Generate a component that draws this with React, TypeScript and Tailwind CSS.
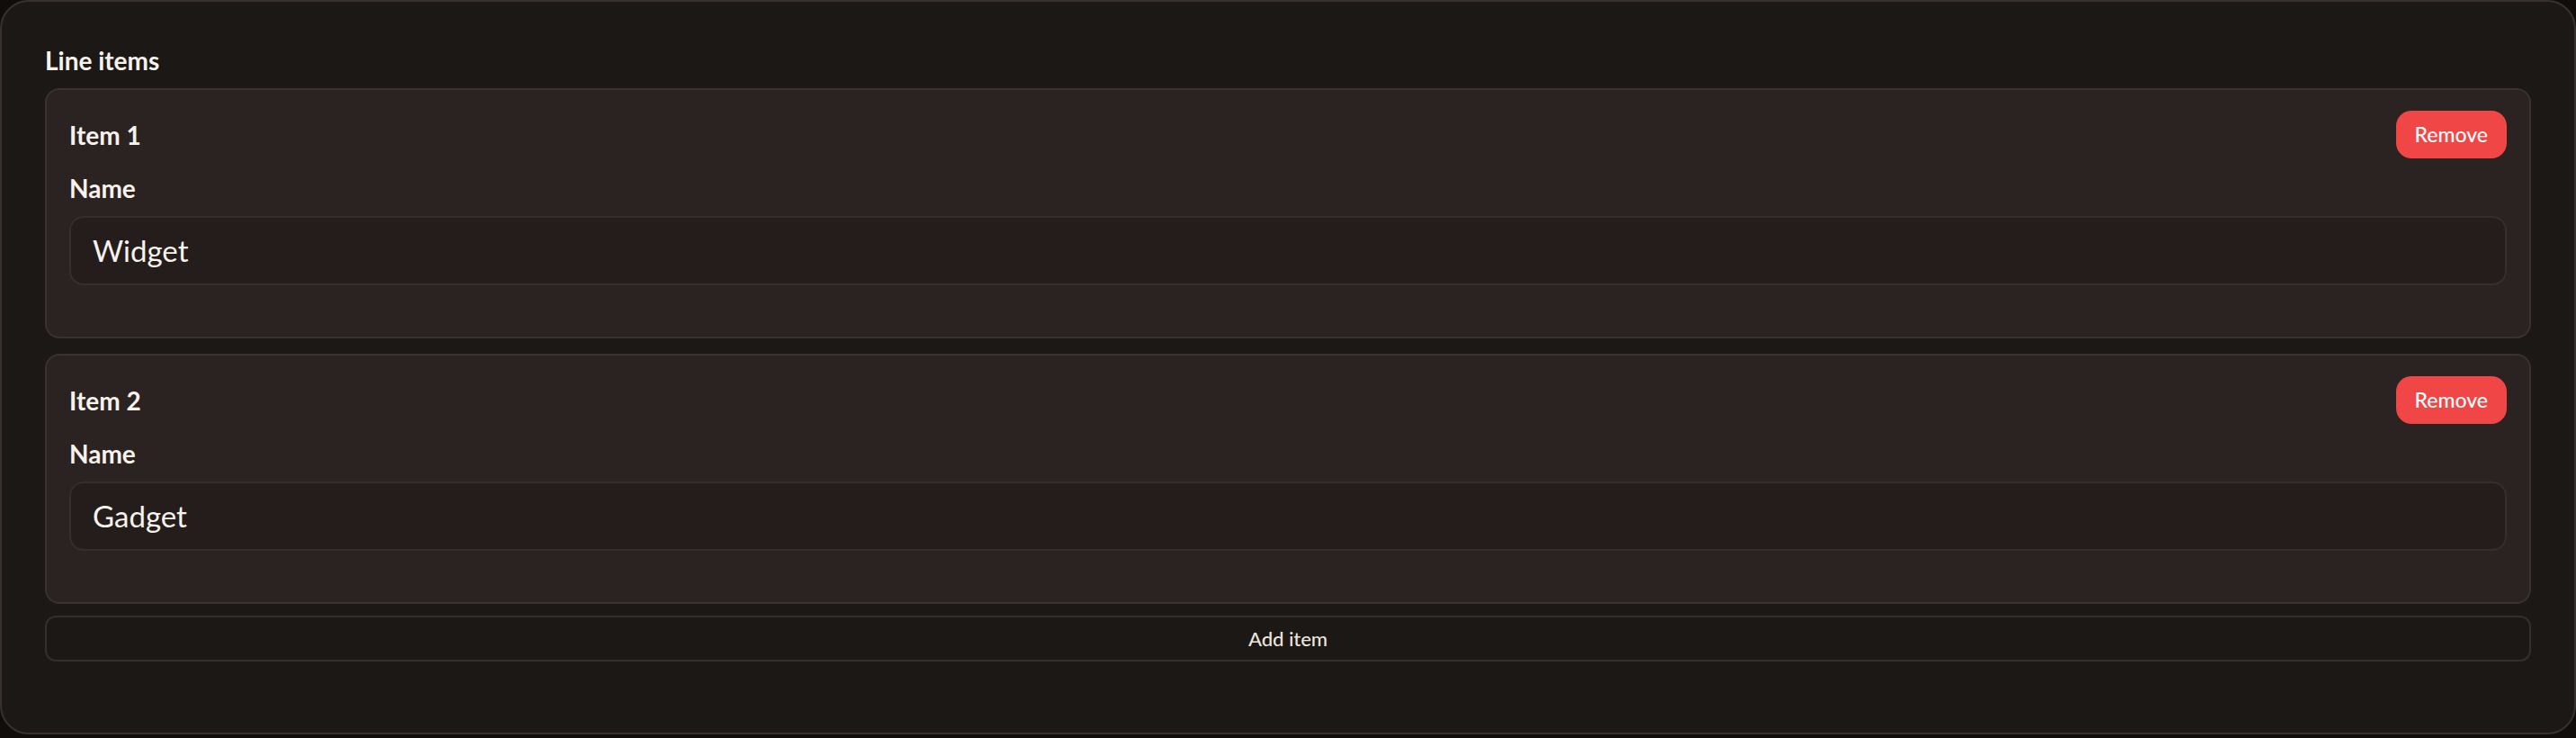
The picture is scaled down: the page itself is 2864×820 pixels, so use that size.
import { useState } from "react";

type LineItem = { id: number; name: string };

const font = { fontFamily: "Lato, 'Noto Sans', sans-serif" };

function ItemCard({ index, item, onRemove }: { index: number; item: LineItem; onRemove: () => void }) {
  return (
    <div className="rounded-[16px] border-2 border-[#3b3230] bg-[#2b2321] px-[25px] pt-[23px] pb-[57px]">
      <div className="flex h-[53px] items-center justify-between">
        <span className="text-[28px] font-bold leading-[42px] text-[#f7f2ec]">Item {index + 1}</span>
        <button
          onClick={onRemove}
          className="h-[53px] rounded-[17px] bg-[#f04646] px-[21px] text-[23px] font-medium text-white"
        >
          Remove
        </button>
      </div>
      <label className="mt-[12px] block text-[28px] font-bold leading-[42px] text-[#f7f2ec]">Name</label>
      <div className="mt-[10px] flex h-[77px] items-center rounded-[16px] border-2 border-[#362e2b] bg-[#241d1b] px-[24px]">
        <span className="text-[33px] text-[#f7f2ec]">{item.name}</span>
      </div>
    </div>
  );
}

export default function App() {
  const [items, setItems] = useState<LineItem[]>([
    { id: 1, name: "Widget" },
    { id: 2, name: "Gadget" },
  ]);

  return (
    <div className="min-h-screen bg-[#100d0b]" style={font}>
      <div className="rounded-[32px] border-2 border-[#3a312e] bg-[#1c1815] px-[48px] pt-[44px] pb-[79px]">
        <h2 className="text-[28px] font-bold leading-[42px] text-[#f7f2ec]">Line items</h2>
        <div className="mt-[10px] flex flex-col gap-[17px]">
          {items.map((item, i) => (
            <ItemCard
              key={item.id}
              index={i}
              item={item}
              onRemove={() => setItems(items.filter((x) => x.id !== item.id))}
            />
          ))}
        </div>
        <button
          onClick={() => setItems([...items, { id: Date.now(), name: "" }])}
          className="mt-[13px] flex h-[51px] w-full items-center justify-center rounded-[12px] border-2 border-[#362e2b] text-[22px] font-medium text-[#ece6df]"
        >
          Add item
        </button>
      </div>
    </div>
  );
}
